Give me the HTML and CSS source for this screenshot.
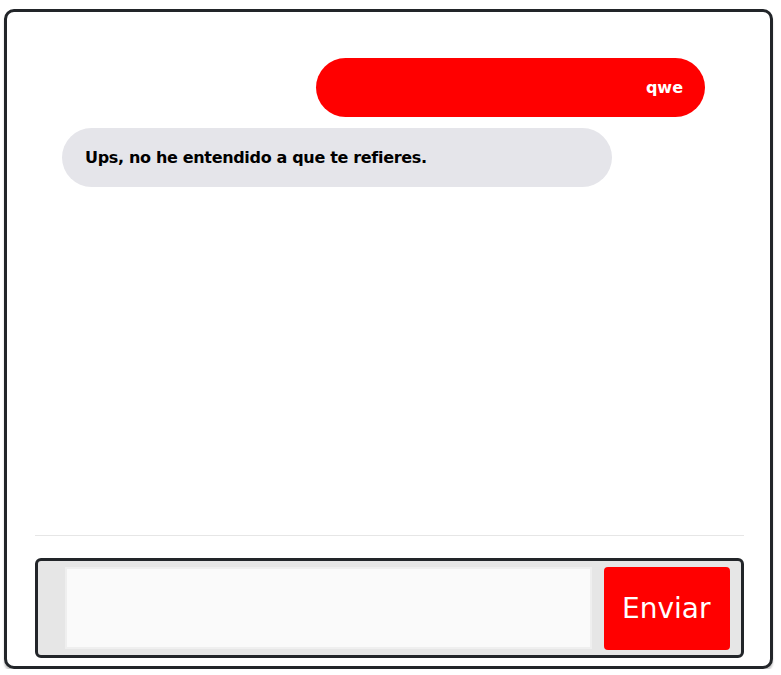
FILE: index.html
```html
<!DOCTYPE html>
<html lang="es">
<head>
<meta charset="utf-8">
<title>Chat</title>
<link rel="stylesheet" href="styles.css">
</head>
<body>
<div class="chat">
  <div class="messages">
    <div class="bubble user">qwe</div>
    <div class="bubble bot">Ups, no he entendido a que te refieres.</div>
  </div>
  <div class="footer">
    <form class="composer">
      <input class="field" type="text">
      <button class="send" type="button">Enviar</button>
    </form>
  </div>
</div>
</body>
</html>
```
FILE: styles.css
```css
html, body {
  margin: 0;
  padding: 0;
  background: #ffffff;
}
body {
  padding: 9px 0 0 4px;
  font-family: "DejaVu Sans", Verdana, sans-serif;
}
.chat {
  box-sizing: border-box;
  width: 769px;
  height: 660px;
  border: 3px solid #222529;
  border-radius: 10px;
  box-shadow: 0 3px 2px rgba(0, 0, 0, 0.22);
  display: flex;
  flex-direction: column;
  background: #fff;
}
.messages {
  flex: 1;
  display: flex;
  flex-direction: column;
  align-items: flex-start;
  gap: 11px;
  padding: 46px 65px 0 55px;
}
.bubble {
  box-sizing: border-box;
  height: 59px;
  border-radius: 30px;
  padding: 0 22px 0 23px;
  display: flex;
  align-items: center;
  font-weight: bold;
  font-size: 16px;
}
.user {
  align-self: flex-end;
  width: 389px;
  background: #ff0000;
  color: #fff;
  justify-content: flex-end;
}
.bot {
  width: 550px;
  background: #e5e5ea;
  color: #000;
  letter-spacing: -0.33px;
}
.footer {
  margin: 0 26px 8px 28px;
  border-top: 1px solid #e6e6e6;
  padding-top: 22px;
}
.composer {
  margin: 0;
  box-sizing: border-box;
  height: 100px;
  border: 3px solid #222529;
  border-radius: 6px;
  background: #e6e6e6;
  display: flex;
  align-items: center;
  gap: 12px;
  padding: 0 10px 0 27px;
}
.field {
  box-sizing: border-box;
  width: 527px;
  height: 82px;
  border: 2px solid #efefef;
  background: #fafafa;
  outline: none;
  margin: 0;
}
.send {
  box-sizing: border-box;
  width: 126px;
  height: 83px;
  border: none;
  border-radius: 4px;
  background: #ff0000;
  color: #fff;
  font-family: "DejaVu Sans", Verdana, sans-serif;
  font-size: 28px;
  padding: 0 0 0 2px;
  margin: 0;
  text-align: left;
  padding-left: 18px;
}
```
